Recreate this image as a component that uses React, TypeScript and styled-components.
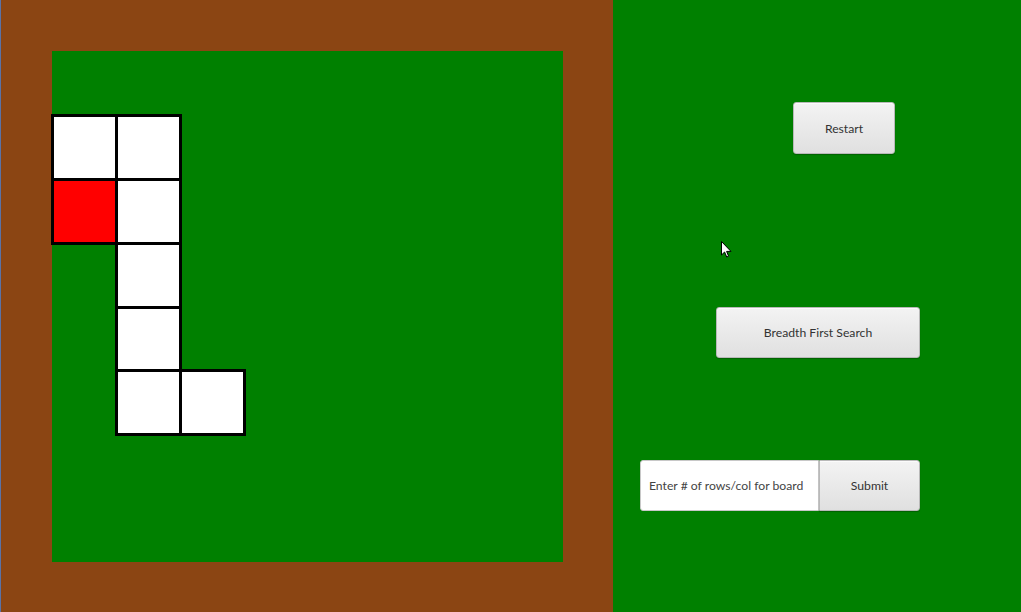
import React from "react";
import styled, { createGlobalStyle } from "styled-components";

const GlobalStyle = createGlobalStyle`
  html, body { margin: 0; padding: 0; overflow: hidden; }
  body { font-family: Lato, "Open Sans", sans-serif; }
  * { box-sizing: border-box; }
`;

const Window = styled.div`
  display: flex;
  width: 1021px;
  height: 612px;
`;

const BoardArea = styled.div`
  width: 613px;
  height: 612px;
  background: #8b4513;
  border-left: 1px solid #5a72a6;
  padding: 51px 0 0 51px;
`;

const Board = styled.div`
  width: 511px;
  height: 511px;
  background: #008000;
  display: grid;
  grid-template-columns: repeat(8, 1fr);
  grid-template-rows: repeat(8, 1fr);
`;

const Cell = styled.div<{ $row: number; $col: number; $start?: boolean }>`
  grid-row: ${(p) => p.$row};
  grid-column: ${(p) => p.$col};
  margin: -1px -2px -2px -1px;
  border: 3px solid #000;
  background: ${(p) => (p.$start ? "#ff0000" : "#ffffff")};
`;

const Controls = styled.div`
  position: relative;
  flex: 1;
  height: 612px;
  background: #008000;
  display: flex;
  flex-direction: column;
  align-items: flex-start;
  padding-top: 102px;
`;

const Button = styled.button<{ $w: number; $h: number }>`
  width: ${(p) => p.$w}px;
  height: ${(p) => p.$h}px;
  border: 1px solid #b9b9b9;
  border-radius: 3px;
  background: linear-gradient(#f3f3f3, #e0e0e0);
  box-shadow: 0 1px 1px rgba(0, 0, 0, 0.25), inset 0 1px 0 #fbfbfb;
  font-family: Lato, "Open Sans", sans-serif;
  font-size: 12.2px;
  color: #333;
  padding: 0;
  cursor: default;
`;

const RestartButton = styled(Button)`
  margin-left: 180px;
`;

const SearchButton = styled(Button)`
  margin-top: 153px;
  margin-left: 103px;
`;

const SizeForm = styled.form`
  display: flex;
  margin-top: 102px;
  margin-left: 27px;
  height: 51px;
`;

const SizeInput = styled.input`
  width: 179px;
  height: 51px;
  border: 1px solid #c8c8c8;
  border-radius: 3px 0 0 3px;
  background: #fff;
  padding: 0 0 0 8px;
  font-family: Lato, "Open Sans", sans-serif;
  font-size: 12.2px;
  color: #333;
  outline: none;
  &::placeholder {
    color: #444;
  }
`;

const SubmitButton = styled(Button)`
  border-radius: 0 3px 3px 0;
`;

const Pointer = styled.svg`
  position: absolute;
  left: 108px;
  top: 241px;
`;

const cells: Array<[number, number, boolean?]> = [
  [2, 1],
  [2, 2],
  [3, 1, true],
  [3, 2],
  [4, 2],
  [5, 2],
  [6, 2],
  [6, 3],
];

export default function App() {
  return (
    <>
      <GlobalStyle />
      <Window>
        <BoardArea>
          <Board>
            {cells.map(([r, c, s]) => (
              <Cell key={`${r}-${c}`} $row={r} $col={c} $start={!!s} />
            ))}
          </Board>
        </BoardArea>
        <Controls>
          <RestartButton $w={102} $h={52} type="button">
            Restart
          </RestartButton>
          <SearchButton $w={204} $h={51} type="button">
            Breadth First Search
          </SearchButton>
          <SizeForm onSubmit={(e) => e.preventDefault()}>
            <SizeInput placeholder="Enter # of rows/col for board" />
            <SubmitButton $w={101} $h={51} type="submit">
              Submit
            </SubmitButton>
          </SizeForm>
          <Pointer width="11" height="17" viewBox="0 0 11 17">
            <path
              d="M0.5 0.5 L0.5 14 L3.6 11 L5.7 16 L7.6 15.2 L5.6 10.4 L10 10.4 Z"
              fill="#fff"
              stroke="#000"
              strokeWidth="1"
              strokeLinejoin="round"
            />
          </Pointer>
        </Controls>
      </Window>
    </>
  );
}
